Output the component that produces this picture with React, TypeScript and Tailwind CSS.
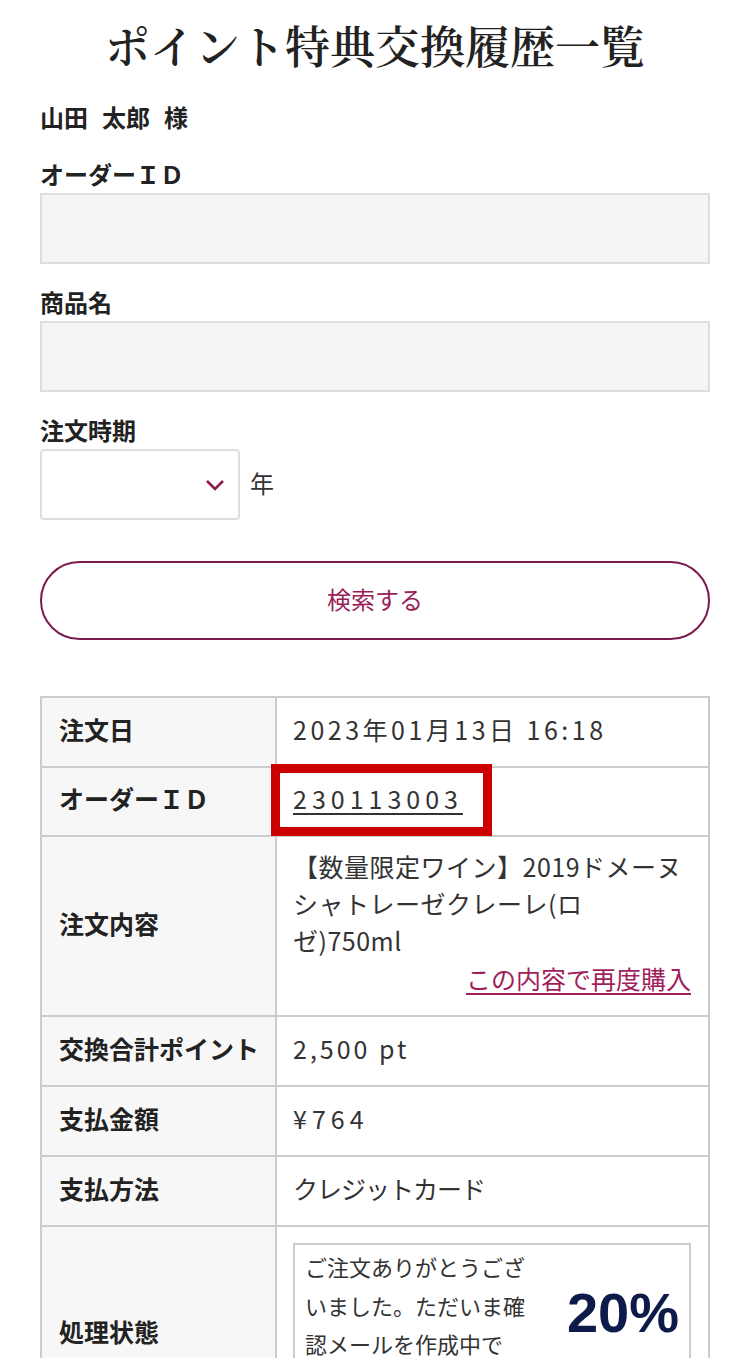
import React from "react";

const sans = { fontFamily: '"Noto Sans CJK JP", "Noto Sans", sans-serif' };

export default function App() {
  return (
    <div className="w-[750px] bg-white text-[#222] font-['Noto_Sans_CJK_JP',sans-serif]" style={sans}>
      <div className="px-[40px]">
        <div className="h-[92px] flex items-center justify-center">
          <h1 className="text-[45px] leading-none font-semibold text-[#222] font-['Noto_Serif_CJK_JP','Noto_Sans_CJK_JP',serif] -mt-[3px]">
            ポイント特典交換履歴一覧
          </h1>
        </div>
        <div className="h-[52px] flex items-center gap-[14px] text-[24px] font-bold pb-[3px]">
          <span>山田</span>
          <span>太郎</span>
          <span>様</span>
        </div>
        <div className="h-[49px] pt-[10px] flex items-center text-[24px] font-bold">オーダーＩＤ</div>
        <div className="h-[71px] bg-[#f5f5f5] border-2 border-[#dedede]"></div>
        <div className="h-[57px] pt-[18px] flex items-center text-[24px] font-bold">商品名</div>
        <div className="h-[71px] bg-[#f5f5f5] border-2 border-[#dedede]"></div>
        <div className="h-[57px] pt-[18px] flex items-center text-[24px] font-bold">注文時期</div>
        <div className="h-[71px] flex items-center gap-[10px]">
          <div className="w-[200px] h-[71px] border-2 border-[#dedede] rounded-[4px] bg-white flex items-center justify-end pr-[12px]">
            <svg width="22" height="14" viewBox="0 0 22 14">
              <polyline points="3,3 11,11 19,3" fill="none" stroke="#8e1a4d" strokeWidth="2.6" />
            </svg>
          </div>
          <span className="text-[24px] text-[#333] -mt-[4px]">年</span>
        </div>
        <button className="mt-[41px] w-full h-[79px] rounded-full border-2 border-[#7a1a4e] text-[#9a1d58] text-[24px] flex items-center justify-center pb-[3px]">
          検索する
        </button>

        <table className="mt-[56px] w-[670px] table-fixed border-collapse border-2 border-[#cccccc] text-[25px]">
          <colgroup>
            <col className="w-[235px]" />
            <col />
          </colgroup>
          <tbody>
            <Row label="注文日" h="h-[70px]">
              <span className="tracking-[3.5px]">2023年01月13日 16:18</span>
            </Row>
            <Row label="オーダーＩＤ" h="h-[69px]">
              <div className="relative">
                <span className="underline underline-offset-[4px] decoration-[1.5px] tracking-[5px]">230113003</span>
                <div className="absolute left-[-22px] top-[-16px] w-[221px] h-[72px] border-[9px] border-[#cc0000] pointer-events-none"></div>
              </div>
            </Row>
            <Row label="注文内容" h="h-[180px]">
              <div className="pb-[2px]">
                <div className="leading-[37px] tracking-[0.5px]">
                  【数量限定ワイン】2019ドメーヌ<br />
                  シャトレーゼクレーレ(ロ<br />
                  ゼ)750ml
                </div>
                <div className="text-right leading-[37px] mt-[1px]">
                  <span className="text-[#a11e5c] underline underline-offset-[4px] decoration-[1.5px]">この内容で再度購入</span>
                </div>
              </div>
            </Row>
            <Row label="交換合計ポイント" h="h-[70px]">
              <span className="tracking-[3px]">2,500 pt</span>
            </Row>
            <Row label="支払金額" h="h-[70px]">
              <span className="tracking-[5px]">¥764</span>
            </Row>
            <Row label="支払方法" h="h-[70px]">
              <span className="tracking-[-1px]">クレジットカード</span>
            </Row>
            <Row label="処理状態" h="h-[216px]" pad={false}>
              <div className="h-[182px] border-2 border-[#cccccc] flex items-start pl-[10px] pr-[10px] pt-[2px]">
                <div className="w-[228px] text-[22px] leading-[38.5px] text-[#333]">
                  ご注文ありがとうございました。ただいま確認メールを作成中です。
                </div>
                <div className="flex-1 flex justify-end pt-[38px] text-[56px] font-bold leading-none text-[#0d1a4a] font-['Liberation_Sans',sans-serif]">
                  20%
                </div>
              </div>
            </Row>
          </tbody>
        </table>
        <div className="h-[60px]"></div>
      </div>
    </div>
  );
}

function Row({
  label,
  h,
  pad = true,
  children,
}: {
  label: string;
  h: string;
  pad?: boolean;
  children: React.ReactNode;
}) {
  return (
    <tr className={h}>
      <th className="bg-[#f7f7f7] border-2 border-[#cccccc] text-left font-bold pl-[17px] pr-[4px] pb-[5px] whitespace-nowrap align-middle">
        {label}
      </th>
      <td
        className={
          pad
            ? "border-2 border-[#cccccc] pl-[16px] pr-[17px] pb-[5px] align-middle text-[#333]"
            : "border-2 border-[#cccccc] pl-[16px] pr-[17px] align-middle text-[#333]"
        }
      >
        {children}
      </td>
    </tr>
  );
}
